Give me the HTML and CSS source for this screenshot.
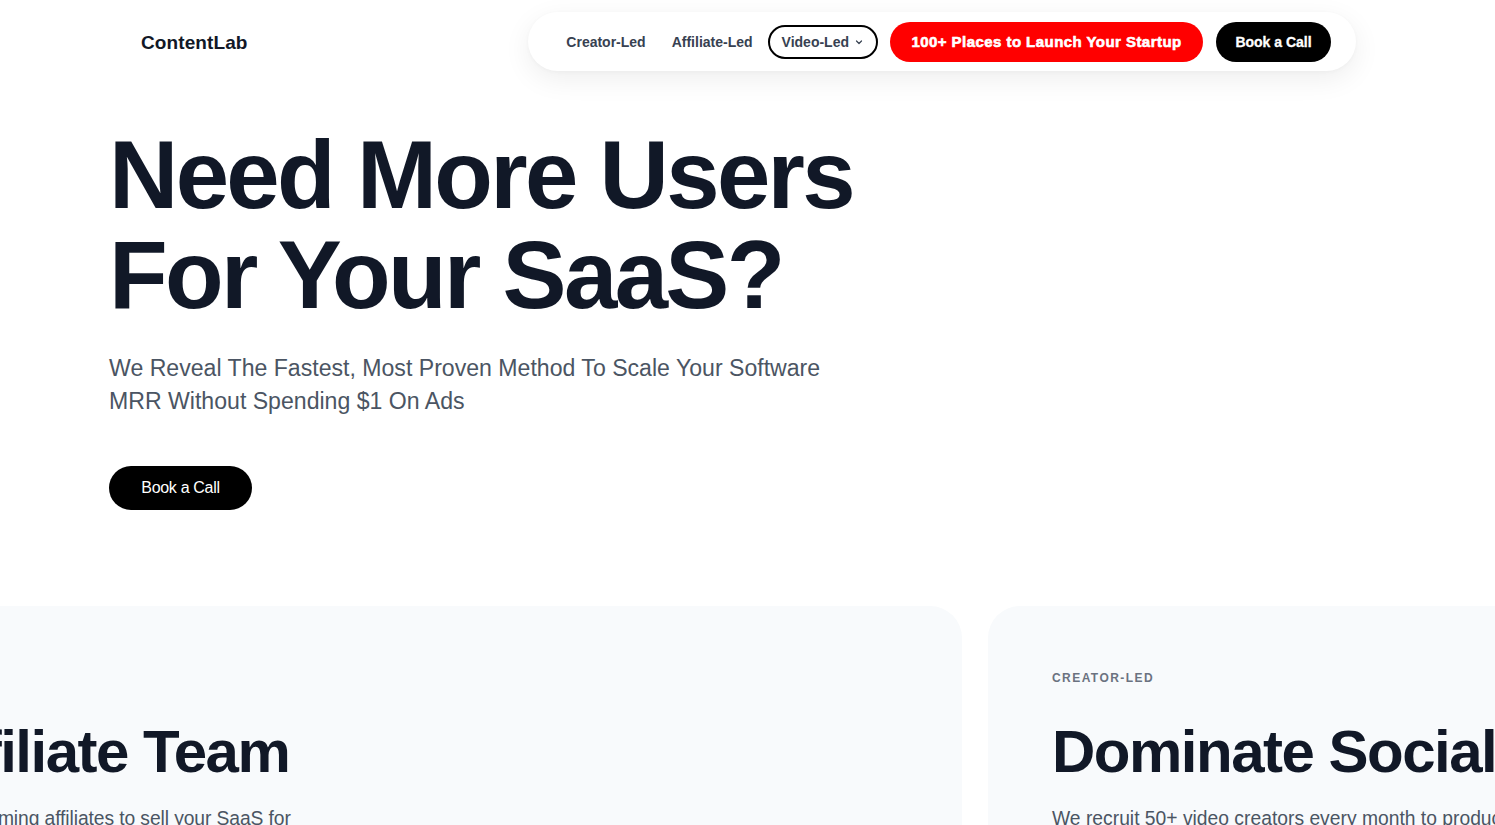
FILE: index.html
```html
<!DOCTYPE html>
<html lang="en">
<head>
<meta charset="utf-8">
<title>ContentLab</title>
<link rel="stylesheet" href="styles.css">
</head>
<body>
<header class="header">
  <a class="logo" href="#">ContentLab</a>
  <nav class="nav">
    <a class="nav-link" href="#">Creator-Led</a>
    <a class="nav-link" href="#">Affiliate-Led</a>
    <button class="nav-drop">Video-Led
      <svg class="chev" width="10" height="10" viewBox="0 0 10 10"><path d="M2.5 4 L5 6.5 L7.5 4" fill="none" stroke="#374151" stroke-width="1.2" stroke-linecap="round" stroke-linejoin="round"/></svg>
    </button>
    <a class="btn-red" href="#">100+ Places to Launch Your Startup</a>
    <a class="btn-black" href="#">Book a Call</a>
  </nav>
</header>

<section class="hero">
  <h1 class="hero-title">Need More Users<br>For Your SaaS?</h1>
  <p class="hero-sub">We Reveal The Fastest, Most Proven Method To Scale Your Software<br>MRR Without Spending $1 On Ads</p>
  <a class="hero-btn" href="#">Book a Call</a>
</section>

<section class="carousel">
  <div class="track">
    <article class="card">
      <div class="card-label">AFFILIATE-LED</div>
      <h2 class="card-title">Build An Affiliate Team</h2>
      <p class="card-text card-text-narrow">We recruit, vet and manage top-performing affiliates to sell your SaaS for commission, so you only pay for results.</p>
    </article>
    <article class="card">
      <div class="card-label">CREATOR-LED</div>
      <h2 class="card-title">Dominate Social Media</h2>
      <p class="card-text">We recruit 50+ video creators every month to produce content that drives signups.</p>
    </article>
  </div>
</section>
</body>
</html>
```

FILE: styles.css
```css
* { box-sizing: border-box; }

html, body {
  margin: 0;
  padding: 0;
  background: #ffffff;
}

body {
  font-family: "Liberation Sans", Arial, sans-serif;
  color: #111827;
  overflow: hidden;
  width: 1495px;
  height: 825px;
}

a { text-decoration: none; }

.header {
  display: flex;
  align-items: center;
  justify-content: space-between;
  padding: 12px 139px 0 141px;
}

.logo {
  margin-top: 2px;
  font-size: 19px;
  font-weight: 700;
  letter-spacing: 0.1px;
  color: #111827;
}

.nav {
  display: flex;
  align-items: center;
  height: 59px;
  padding: 0 25px 0 25px;
  background: #ffffff;
  border-radius: 9999px;
  box-shadow: 0 8px 28px rgba(0, 0, 0, 0.07), 0 1px 4px rgba(0, 0, 0, 0.03);
}

.nav-link {
  padding: 8px 13px;
  font-size: 14px;
  font-weight: 700;
  color: #374151;
}

.nav-drop {
  display: flex;
  align-items: center;
  gap: 5px;
  height: 34px;
  margin-left: 2px;
  padding: 0 12px 0 12px;
  border: 2px solid #000000;
  border-radius: 9999px;
  background: #ffffff;
  font-family: "Liberation Sans", Arial, sans-serif;
  font-size: 14px;
  font-weight: 700;
  color: #374151;
  cursor: pointer;
}

.chev { display: block; margin-top: 1px; }

.btn-red {
  display: flex;
  align-items: center;
  justify-content: center;
  height: 40px;
  width: 313px;
  margin-left: 12px;
  border-radius: 9999px;
  background: #ff0000;
  color: #ffffff;
  font-size: 15px;
  font-weight: 700;
  letter-spacing: 0.45px;
  -webkit-text-stroke: 0.6px #ffffff;
}

.btn-black {
  display: flex;
  align-items: center;
  justify-content: center;
  height: 40px;
  width: 115px;
  margin-left: 13px;
  border-radius: 9999px;
  background: #000000;
  color: #ffffff;
  font-size: 14px;
  font-weight: 700;
  -webkit-text-stroke: 0.3px #ffffff;
}

.hero {
  padding: 54px 0 0 109px;
}

.hero-title {
  margin: 0;
  font-size: 96px;
  line-height: 100px;
  font-weight: 700;
  letter-spacing: -0.028em;
  color: #111827;
}

.hero-sub {
  margin: 27px 0 0;
  font-size: 23.1px;
  line-height: 33px;
  color: #4b5563;
}

.hero-btn {
  display: inline-flex;
  align-items: center;
  justify-content: center;
  margin-top: 48px;
  width: 143px;
  height: 44px;
  border-radius: 9999px;
  background: #000000;
  color: #ffffff;
  font-size: 16px;
  letter-spacing: -0.02em;
}

.carousel {
  margin-top: 96px;
  overflow: hidden;
}

.track {
  display: flex;
  gap: 26px;
  transform: translateX(-388px);
}

.card {
  flex: 0 0 1350px;
  height: 560px;
  padding: 64px;
  border-radius: 32px;
  background: #f8fafc;
}

.card-label {
  font-size: 12px;
  line-height: 16px;
  font-weight: 700;
  letter-spacing: 0.12em;
  color: #6b7280;
}

.card-title {
  margin: 36px 0 0;
  font-size: 60px;
  line-height: 60px;
  font-weight: 700;
  letter-spacing: -0.025em;
  color: #111827;
  white-space: nowrap;
}

.card-text {
  margin: 23px 0 0;
  max-width: 640px;
  font-size: 19.3px;
  line-height: 28px;
  color: #4b5563;
}

.card-text-narrow {
  letter-spacing: -0.005em;
}
```
